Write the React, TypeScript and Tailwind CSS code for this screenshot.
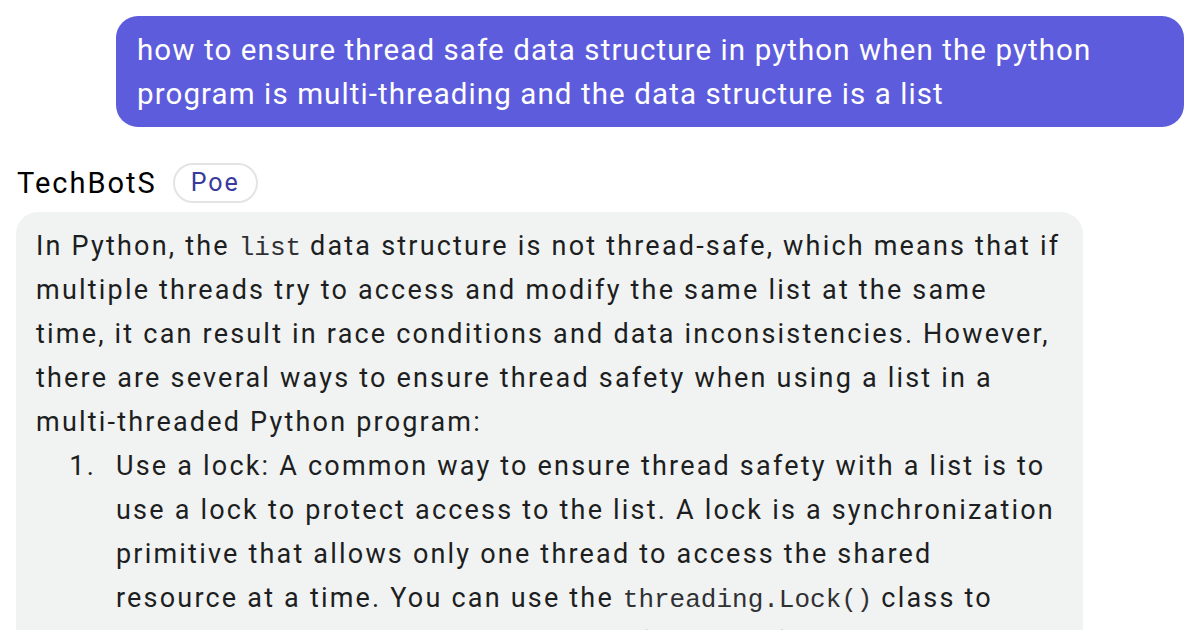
const Code = ({ children }: { children: string }) => (
  <code className="font-['Liberation_Mono','DejaVu_Sans_Mono',monospace] text-[26px] leading-none tracking-normal text-[#2f3134]">{children}</code>
)

export default function App() {
  return (
    <div className="w-[1200px] h-[630px] overflow-hidden bg-white px-4 pt-4 font-['Roboto','Liberation_Sans',sans-serif] text-[#1c1e21]">
      {/* user message */}
      <div className="flex justify-end">
        <div className="w-[1068px] rounded-[22px] bg-[#5d5cdd] px-[21px] pt-3 pb-[11px] text-[29.5px] leading-[44px] tracking-[1.1px] text-white">
          how to ensure thread safe data structure in python when the python program is multi-threading and the data structure is a list
        </div>
      </div>

      {/* bot header */}
      <div className="mt-9 flex items-center gap-4 leading-10">
        <span className="pl-px text-[29px] tracking-[2px] text-black">TechBotS</span>
        <span className="flex h-10 items-center rounded-full border-2 border-[#e3e4e6] px-4 text-[25px] tracking-[2px] text-[#3a3a9c]">Poe</span>
      </div>

      {/* bot message */}
      <div className="mt-[9px] w-[1067px] rounded-[22px] bg-[#f1f2f2] px-5 pt-3 pb-4 text-[27px] leading-[44px] tracking-[2.2px]">
        <p>
          In Python, the <Code>list</Code> data structure is not thread-safe, which means that if multiple threads try to access and modify the same list at the same time, it can result in race conditions and data inconsistencies. However, there are several ways to ensure thread safety when using a list in a multi-threaded Python program:
        </p>
        <ol>
          <li className="flex">
            <span className="w-[80px] shrink-0 pr-5 text-right">1.</span>
            <span>
              Use a lock: A common way to ensure thread safety with a list is to use a lock to protect access to the list. A lock is a synchronization primitive that allows only one thread to access the shared resource at a time. You can use the <Code>threading.Lock()</Code> class to create a lock object and acquire it before modifying the list.
            </span>
          </li>
        </ol>
      </div>
    </div>
  )
}
